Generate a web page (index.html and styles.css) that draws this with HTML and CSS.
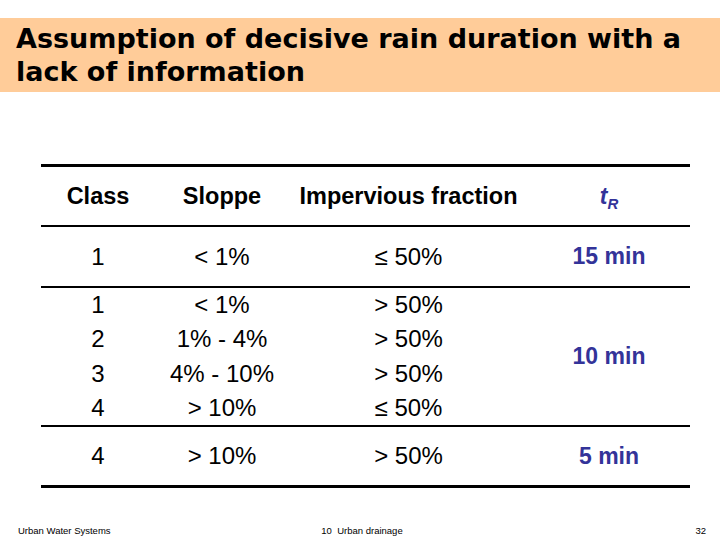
FILE: index.html
```html
<!DOCTYPE html>
<html>
<head>
<meta charset="utf-8">
<link rel="stylesheet" href="styles.css">
</head>
<body>
<header class="band">
  <h1 class="title">Assumption of decisive rain duration with a lack of information</h1>
</header>
<div class="table">
  <div class="row head">
    <div>Class</div>
    <div>Sloppe</div>
    <div>Impervious fraction</div>
    <div class="blue tr"><i>t</i><sub>R</sub></div>
  </div>
  <div class="row r1">
    <div>1</div>
    <div>&lt; 1%</div>
    <div>&le; 50%</div>
    <div class="blue val">15 min</div>
  </div>
  <div class="row multi">
    <div class="stack"><span>1</span><span>2</span><span>3</span><span>4</span></div>
    <div class="stack"><span>&lt; 1%</span><span>1% - 4%</span><span>4% - 10%</span><span>&gt; 10%</span></div>
    <div class="stack"><span>&gt; 50%</span><span>&gt; 50%</span><span>&gt; 50%</span><span>&le; 50%</span></div>
    <div class="blue val">10 min</div>
  </div>
  <div class="row last">
    <div>4</div>
    <div>&gt; 10%</div>
    <div>&gt; 50%</div>
    <div class="blue val">5 min</div>
  </div>
</div>
<footer class="footer">
  <span>Urban Water Systems</span>
  <span>10&nbsp; Urban drainage</span>
  <span class="num">32</span>
</footer>
</body>
</html>
```
FILE: styles.css
```css
html, body {
  margin: 0;
  padding: 0;
  background: #ffffff;
}
body {
  width: 720px;
  height: 540px;
  overflow: hidden;
  font-family: "Liberation Sans", Arial, sans-serif;
  color: #000;
}
.band {
  margin-top: 18px;
  height: 74px;
  background: #ffcc99;
  box-sizing: border-box;
  padding: 4px 0 0 16px;
}
.title {
  margin: 0;
  font-family: "DejaVu Sans", "Liberation Sans", sans-serif;
  font-weight: bold;
  font-size: 27px;
  line-height: 33px;
  width: 690px;
}
.table {
  margin: 72px 0 0 41px;
  width: 649px;
  border-top: 3px solid #000;
  border-bottom: 3px solid #000;
}
.row {
  display: grid;
  grid-template-columns: 114px 134px 239px 162px;
  align-items: center;
  justify-items: center;
  border-bottom: 2px solid #000;
  font-size: 24px;
  text-align: center;
}
.row.last {
  border-bottom: none;
  height: 58px;
}
.head {
  height: 58px;
  font-weight: bold;
  font-size: 23.5px;
}
.r1 {
  height: 59px;
}
.multi {
  height: 137px;
}
.stack {
  display: flex;
  flex-direction: column;
  align-items: center;
  line-height: 34.3px;
}
.blue {
  color: #333399;
}
.val {
  font-weight: bold;
  font-size: 23px;
}
.tr {
  font-weight: bold;
  font-style: italic;
  font-size: 23px;
}
.tr sub {
  font-size: 15px;
  vertical-align: -5px;
  font-style: italic;
  line-height: 0;
}
.footer {
  margin-top: 37px;
  display: grid;
  grid-template-columns: 1fr auto 1fr;
  padding: 0 14px 0 18px;
  font-size: 9.5px;
  line-height: 11px;
}
.footer .num {
  text-align: right;
}
```
